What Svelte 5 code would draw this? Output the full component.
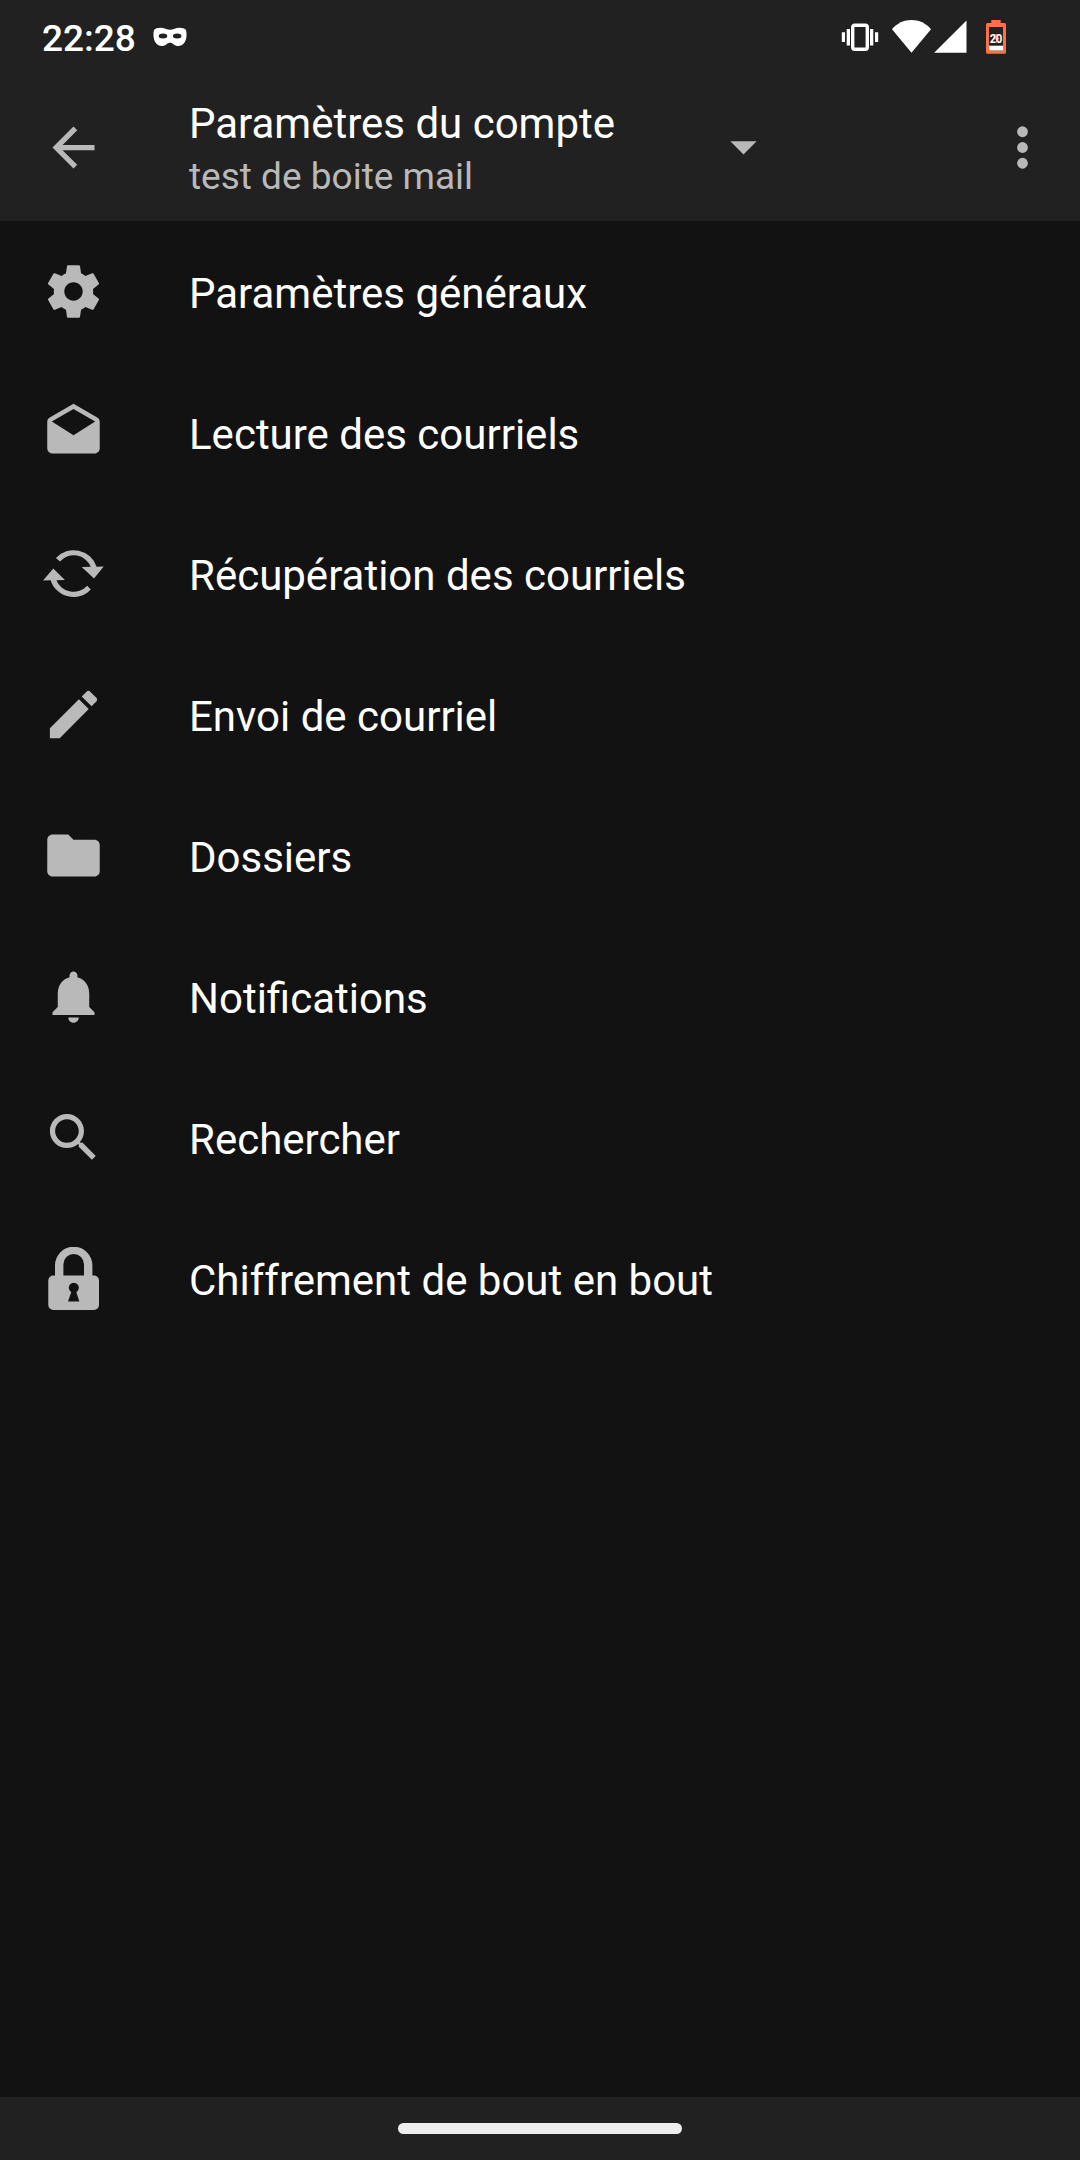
<script>
    let time = "22:28";
    let battery = 20;
    let account = "test de boite mail";

    // 24x24 paths unless a size is given
    const items = [
        {
            id: "general",
            title: "Paramètres généraux",
            path: "M19.43 12.98c.04-.32.07-.64.07-.98s-.03-.66-.07-.98l2.11-1.65c.19-.15.24-.42.12-.64l-2-3.46c-.12-.22-.39-.3-.61-.22l-2.49 1c-.52-.4-1.08-.73-1.69-.98l-.38-2.65C14.46 2.18 14.25 2 14 2h-4c-.25 0-.46.18-.49.42l-.38 2.65c-.61.25-1.17.59-1.69.98l-2.49-1c-.23-.09-.49 0-.61.22l-2 3.46c-.13.22-.07.49.12.64l2.11 1.65c-.04.32-.07.65-.07.98s.03.66.07.98l-2.11 1.65c-.19.15-.24.42-.12.64l2 3.46c.12.22.39.3.61.22l2.49-1c.52.4 1.08.73 1.69.98l.38 2.65c.03.24.24.42.49.42h4c.25 0 .46-.18.49-.42l.38-2.65c.61-.25 1.17-.59 1.69-.98l2.49 1c.23.09.49 0 .61-.22l2-3.46c.12-.22.07-.49-.12-.64l-2.11-1.65zM12 15.5c-1.93 0-3.5-1.57-3.5-3.5s1.57-3.5 3.5-3.5 3.5 1.57 3.5 3.5-1.57 3.5-3.5 3.5z",
        },
        {
            id: "reading",
            title: "Lecture des courriels",
            path: "M21.99 8c0-.72-.37-1.35-.94-1.7L12 1 2.95 6.3C2.38 6.65 2 7.28 2 8v10c0 1.1.9 2 2 2h16c1.1 0 2-.9 2-2l-.01-10zM12 13L3.74 7.84 12 3l8.26 4.84L12 13z",
        },
        {
            id: "fetching",
            title: "Récupération des courriels",
            size: 63,
            path: "M13.9 16.1A24 24 0 0 1 54.6 24.8L61.7 24.4 52 36.4 39.7 24.9 48.8 24.8A18.4 18.4 0 0 0 18 19.5ZM48.8 47.5A24 24 0 0 1 8.6 38.3L1 38.6 11.3 26.6 22.9 38 14.4 38.2A18.4 18.4 0 0 0 45.2 43.7Z",
        },
        {
            id: "sending",
            title: "Envoi de courriel",
            path: "M3 17.25V21h3.75L17.81 9.94l-3.75-3.75L3 17.25zM20.71 7.04c.39-.39.39-1.02 0-1.41l-2.34-2.34c-.39-.39-1.02-.39-1.41 0l-1.83 1.83 3.75 3.75 1.83-1.83z",
        },
        {
            id: "folders",
            title: "Dossiers",
            path: "M10 4H4c-1.1 0-1.99.9-1.99 2L2 18c0 1.1.9 2 2 2h16c1.1 0 2-.9 2-2V8c0-1.1-.9-2-2-2h-8l-2-2z",
        },
        {
            id: "notifications",
            title: "Notifications",
            path: "M12 22c1.1 0 2-.9 2-2h-4c0 1.1.89 2 2 2zM18 16v-5c0-3.07-1.64-5.64-4.5-6.32V4c0-.83-.67-1.5-1.5-1.5s-1.5.67-1.5 1.5v.68C7.63 5.36 6 7.92 6 11v5l-2 2v1h16v-1l-2-2z",
        },
        {
            id: "search",
            title: "Rechercher",
            path: "M15.5 14h-.79l-.28-.27C15.41 12.59 16 11.11 16 9.5 16 5.91 13.09 3 9.5 3S3 5.91 3 9.5 5.91 16 9.5 16c1.61 0 3.09-.59 4.23-1.57l.27.28v.79l5 4.99L20.49 19l-4.99-5zm-6 0C7.01 14 5 11.99 5 9.5S7.01 5 9.5 5 14 7.01 14 9.5 11.99 14 9.5 14z",
        },
        {
            id: "crypto",
            title: "Chiffrement de bout en bout",
            size: 63,
            path: "M13 28.6V18.4A18.7 18.7 0 0 1 50.4 18.4V28.6H52A5 5 0 0 1 57 33.6V58A5 5 0 0 1 52 63H11.3A5 5 0 0 1 6.3 58V33.6A5 5 0 0 1 11.3 28.6ZM21.4 28.6H42V17.3A10.3 10.3 0 0 0 21.4 17.3ZM29.3 45L26 54.6H37.3L34.3 45A5 5 0 1 0 29.3 45Z",
        },
    ];
</script>

<div class="screen">
    <header>
        <div class="status">
            <span class="time">{time}</span>
            <svg class="mask" viewBox="0 0 34 20" width="34" height="20">
                <path
                    fill-rule="evenodd"
                    d="M1 3C3 .4 9 .2 12.500 1.800C15.500 3.200 18.500 3.200 21.500 1.800C25 .2 31 .4 33 3C34.200 8 33.500 13.500 30.500 16.800C27.500 19.800 23 19.600 20.500 17.200C18.500 15.200 15.500 15.200 13.500 17.200C11 19.600 6.500 19.800 3.500 16.800C.5 13.500 -.2 8 1 3ZM5.700 9A4.300 2.500 0 0 0 14.300 9A4.300 2.500 0 0 0 5.700 9ZM19.900 9A4.300 2.500 0 0 0 28.500 9A4.300 2.500 0 0 0 19.900 9Z"
                />
            </svg>
            <div class="system">
                <svg class="vibrate" viewBox="0 0 38 28" width="38" height="28">
                    <rect x="11.700" y="2.200" width="14.600" height="24" rx="2" fill="none" stroke="#fff" stroke-width="3.400" />
                    <path d="M.8 9.300h3.200v9.700h-3.200zM5.700 6h3.300v16.400h-3.300zM29 6h3.300v16.400h-3.300zM34 9.300h3.200v9.700h-3.200z" />
                </svg>
                <svg class="wifi" viewBox="0 0 39 33" width="39" height="33">
                    <path d="M0 9.200C5 3.200 12 0 19.500 0S34 3.200 39 9.200L19.500 32.800Z" />
                </svg>
                <svg class="signal" viewBox="0 0 33 33" width="33" height="33">
                    <path d="M32.500 .4V32.800H.2Z" />
                </svg>
                <svg class="battery" viewBox="0 0 20 34" width="20" height="34">
                    <path
                        fill="#ff7043"
                        fill-rule="evenodd"
                        d="M5.300 0H14.700V3H18.500Q20 3 20 4.500V32.300Q20 33.800 18.500 33.800H1.500Q0 33.800 0 32.300V4.500Q0 3 1.500 3H5.300ZM3 7V30.500H17V7Z"
                    />
                    <rect x="3" y="25.700" width="14" height="4.800" />
                    <path fill="#ff7043" d="M9 14H12V18H13.500L10 23.500V19.500H7Z" />
                    <text x="10" y="23.400" text-anchor="middle" textLength="12.500" lengthAdjust="spacingAndGlyphs">{battery}</text>
                </svg>
            </div>
        </div>
        <div class="toolbar">
            <button aria-label="Retour">
                <svg class="icon" viewBox="0 0 24 24">
                    <path d="M20 11H7.830l5.590-5.590L12 4l-8 8 8 8 1.410-1.410L7.830 13H20v-2z" />
                </svg>
            </button>
            <div class="spinner">
                <div class="titles">
                    <h1>Paramètres du compte</h1>
                    <p>{account}</p>
                </div>
                <svg class="icon arrow" viewBox="0 0 24 24">
                    <path d="M7 10l5 5 5-5z" />
                </svg>
            </div>
            <button class="more" aria-label="Plus d'options">
                <svg class="icon" viewBox="0 0 24 24">
                    <circle cx="12" cy="6" r="2.050" />
                    <circle cx="12" cy="12" r="2.050" />
                    <circle cx="12" cy="18" r="2.050" />
                </svg>
            </button>
        </div>
    </header>

    <ul>
        {#each items as item (item.id)}
            <li>
                <svg class="icon" viewBox="0 0 {item.size || 24} {item.size || 24}">
                    <path fill-rule="evenodd" d={item.path} />
                </svg>
                <span>{item.title}</span>
            </li>
        {/each}
    </ul>

    <footer><div class="pill"></div></footer>
</div>

<style>
    :global(body) {
        margin: 0;
        background: #121212;
    }

    .screen {
        width: 1080px;
        height: 2160px;
        display: flex;
        flex-direction: column;
        background: #121212;
        color: #fff;
        font-family: Roboto, sans-serif;
        overflow: hidden;
    }

    svg {
        display: block;
        flex: none;
        fill: #fff;
    }

    header {
        height: 221px;
        background: #212121;
    }

    .status {
        height: 74px;
        box-sizing: border-box;
        padding: 0 74px 0 42px;
        display: flex;
        align-items: center;
    }

    .time {
        width: 94px;
        font-size: 37px;
        font-weight: 500;
        line-height: 44px;
        padding-top: 4px;
    }

    .mask {
        margin-left: 17px;
    }

    .system {
        margin-left: auto;
        display: flex;
        align-items: flex-start;
    }

    .vibrate {
        margin-top: 3px;
    }

    .wifi {
        margin-left: 13px;
    }

    .signal {
        margin-left: 3px;
    }

    .battery {
        margin-left: 19px;
    }

    .battery text {
        font-size: 13.5px;
        font-weight: 700;
    }

    .toolbar {
        height: 147px;
        box-sizing: border-box;
        padding: 0 26px 0 42px;
        display: flex;
        align-items: center;
    }

    button {
        background: none;
        border: none;
        padding: 0;
        cursor: pointer;
    }

    .icon {
        width: 63px;
        height: 63px;
        fill: #b9b9b9;
    }

    .arrow {
        margin-bottom: 3px;
    }

    .spinner {
        display: flex;
        align-items: center;
        width: 586px;
        margin-left: 84px;
    }

    .titles {
        flex: 1;
        padding-top: 2px;
    }

    h1 {
        margin: 0;
        font-size: 42px;
        font-weight: 400;
        line-height: 57px;
    }

    p {
        margin: 0;
        font-size: 37px;
        line-height: 50px;
        color: #b9b9b9;
    }

    .more {
        margin-left: auto;
    }

    ul {
        flex: 1;
        margin: 0;
        padding: 0;
        list-style-type: none;
    }

    li {
        height: 141px;
        padding-left: 42px;
        display: flex;
        align-items: center;
    }

    li span {
        margin-left: 84px;
        padding-top: 5px;
        font-size: 42px;
        line-height: 50px;
    }

    footer {
        height: 63px;
        box-sizing: border-box;
        padding-top: 26px;
        background: #212121;
    }

    .pill {
        width: 284px;
        height: 11px;
        margin: 0 auto;
        border-radius: 6px;
        background: #ededed;
    }
</style>
